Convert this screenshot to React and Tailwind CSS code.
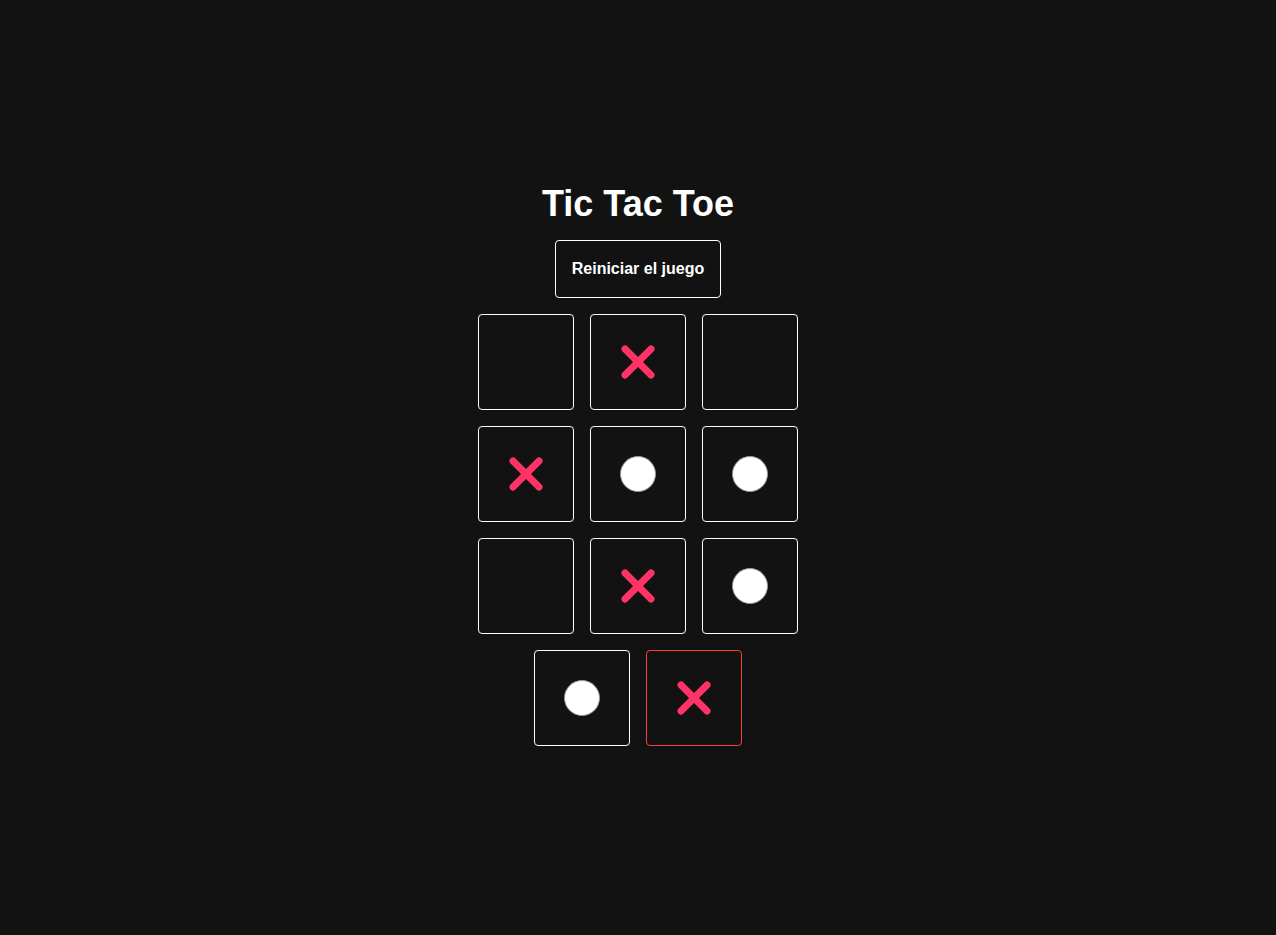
import React from 'react';

const board = [null, 'x', null, 'x', 'o', 'o', null, 'x', 'o'];

function Cross() {
    return (
        <svg width="40" height="40" viewBox="0 0 40 40">
            <line x1="7" y1="7" x2="33" y2="33" stroke="#ff3366" strokeWidth="7" strokeLinecap="round" />
            <line x1="33" y1="7" x2="7" y2="33" stroke="#ff3366" strokeWidth="7" strokeLinecap="round" />
        </svg>
    );
}

function Circle() {
    return <div className="w-9 h-9 rounded-full bg-white border border-[#9a9a9a]" />;
}

function Square({ value, active }) {
    return (
        <div
            className={`w-24 h-24 flex items-center justify-center rounded border ${
                active ? 'border-[#ff3b3b]' : 'border-white'
            }`}
        >
            {value === 'x' && <Cross />}
            {value === 'o' && <Circle />}
        </div>
    );
}

export default function App() {
    return (
        <div
            className="min-h-screen bg-[#121212] text-white flex flex-col items-center justify-center gap-4 pb-1.5"
            style={{ fontFamily: '"Liberation Sans", Arial, sans-serif' }}
        >
            <h1 className="text-4xl font-bold leading-10">Tic Tac Toe</h1>
            <button className="px-4 py-4 border border-white rounded text-base font-bold leading-6 bg-transparent text-white">
                Reiniciar el juego
            </button>
            <div className="grid grid-cols-3 gap-4">
                {board.map((v, i) => (
                    <Square key={i} value={v} />
                ))}
            </div>
            <div className="flex gap-4">
                <Square value="o" />
                <Square value="x" active />
            </div>
        </div>
    );
}
